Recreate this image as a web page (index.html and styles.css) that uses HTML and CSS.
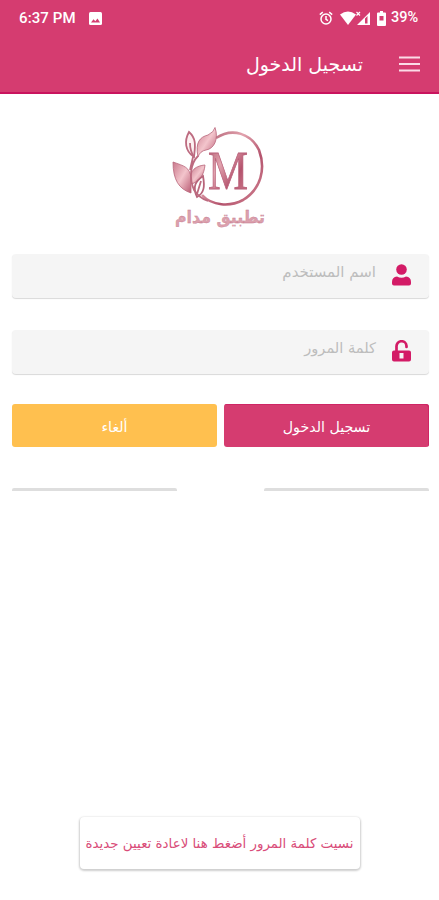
FILE: index.html
```html
<!DOCTYPE html>
<html lang="ar">
<head>
<meta charset="utf-8">
<title>تسجيل الدخول</title>
<link rel="stylesheet" href="styles.css">
</head>
<body>
<header class="top">
  <div class="status">
    <span class="clock">6:37 PM</span>
    <svg class="photo" width="13" height="13" viewBox="0 0 13 13"><rect width="13" height="13" rx="1.500" fill="#fff"/><path d="M2 10.500 4.500 7.300 6.300 9.300 8.500 6.500 11 10.500Z" fill="#d53c70"/></svg>
    <svg class="alarm" width="14" height="15" viewBox="0 0 14 15" fill="none" stroke="#fff" stroke-width="1.500"><circle cx="7" cy="8" r="5"/><path d="M.8 3.600 3.800 1.200M13.200 3.600 10.200 1.200M7 5v3.300l2 1.400"/></svg>
    <svg class="signal" width="31" height="15" viewBox="0 0 31 15"><path d="M0 3.500Q8-2.500 16 3.500L8 14Z" fill="#fff"/><path fill-rule="evenodd" d="M30 1V14H17ZM25 7.500V12.500H27.500V5Z" fill="#fff"/><path d="M16.500 1l3.500 3.500M20 1l-3.500 3.500" stroke="#fff" stroke-width="1.200"/></svg>
    <svg class="battery" width="9" height="15" viewBox="0 0 9 15"><path fill-rule="evenodd" d="M3 0h3v1.500h2q1 0 1 1V14q0 1-1 1H1q-1 0-1-1V2.500q0-1 1-1h2ZM2.500 5v4.500h4V5Z" fill="#fff"/></svg>
    <span class="percent">39%</span>
  </div>
  <div class="bar" dir="rtl">
    <svg class="menu" width="21" height="16" viewBox="0 0 21 16"><path d="M0 1.500h21M0 8h21M0 14.500h21" stroke="#fbdce7" stroke-width="2"/></svg>
    <h1 class="title">تسجيل الدخول</h1>
  </div>
</header>
<main class="page">
  <svg class="logo" width="110" height="116" viewBox="165 122 110 116">
    <defs>
      <linearGradient id="rose" x1="0" y1="0" x2="1" y2="1"><stop offset="0" stop-color="#a95468"/><stop offset=".35" stop-color="#e2a3ae"/><stop offset=".65" stop-color="#b4536d"/><stop offset="1" stop-color="#d38694"/></linearGradient>
      <linearGradient id="leaf" x1="0" y1="0" x2="1" y2="1"><stop offset="0" stop-color="#c9798c"/><stop offset=".5" stop-color="#f3c5cc"/><stop offset="1" stop-color="#b95b73"/></linearGradient>
    </defs>
    <path d="M216 138C233 127 251 134 259 150C266 169 261 189 243 200C230 207 212 206 202 195" fill="none" stroke="url(#rose)" stroke-width="2.600"/>
    <g fill="url(#leaf)" stroke="#b7647a" stroke-width=".8">
      <path d="M198 157C195 142 200 137 208 135Q214 132 215 127.500C219 139 214 149 206 150Q200 151 198 157Z"/>
      <path d="M173 162C184 166 190 167 191 178V193C179 189 173 180 173 162Z"/>
      <path d="M192 184C188 172 194 166 205 165C204 174 201 180 192 184Z"/>
      <path d="M197 197C192 186 196 181 203 176C205 187 204 193 197 197Z" fill="#fff" stroke-width="1.800"/>
    </g>
    <g fill="none" stroke="#bd6b80" stroke-width="1.800">
      <path d="M189 132C197 139 195 147 194 157C185 151 184 141 189 132Z" fill="#fdf1f2"/>
      <path d="M198 156C190 164 189 178 194 190Q199 198 208 201M190 143Q190 151 194 157M193 157L190 170M201 181L197 194"/>
    </g>
    <text class="letter" x="228" y="189" text-anchor="middle" textLength="40" lengthAdjust="spacingAndGlyphs">M</text>
    <text class="brand" x="220" y="223" text-anchor="middle" textLength="90" lengthAdjust="spacingAndGlyphs" direction="rtl">تطبيق مدام</text>
  </svg>
  <form class="form" dir="rtl">
    <label class="field">
      <svg width="19" height="22" viewBox="0 0 19 22" fill="#d31b66"><circle cx="9.500" cy="5.500" r="5.300"/><path d="M5 12.500Q9.500 15 14 12.500Q19 13 19 18V19.500Q19 21.500 17 21.500H2Q0 21.500 0 19.500V18Q0 13 5 12.500Z"/></svg>
      <span class="hint user">اسم المستخدم</span>
    </label>
    <label class="field">
      <svg width="19" height="22" viewBox="0 0 19 22"><path d="M4.500 11V6.500A5 5 0 0 1 14.500 6V7" fill="none" stroke="#d31b66" stroke-width="2.700" stroke-linecap="round"/><path fill-rule="evenodd" d="M2 10.500H17Q19 10.500 19 12.500V19.500Q19 21.500 17 21.500H2Q0 21.500 0 19.500V12.500Q0 10.500 2 10.500ZM7.500 13V18.500H11.500V13Z" fill="#d31b66"/></svg>
      <span class="hint pass">كلمة المرور</span>
    </label>
    <div class="actions">
      <button class="btn login" type="button"><span>تسجيل الدخول</span></button>
      <button class="btn cancel" type="button"><span>ألغاء</span></button>
    </div>
    <div class="rules"><i></i><i></i></div>
  </form>
  <button class="forgot" type="button" dir="rtl"><span>نسيت كلمة المرور أضغط هنا لاعادة تعيين جديدة</span></button>
</main>
</body>
</html>
```
FILE: styles.css
```css
* { box-sizing: border-box; }
body { margin: 0; background: #fff; font-family: "DejaVu Sans", sans-serif; }
svg { flex: none; display: block; }
.top { height: 94px; background: #d53c70; border-bottom: 2px solid #c9145e; color: #fff; }
.status { height: 36px; display: flex; align-items: center; padding: 0 20px 0 19px; font: 500 15px/36px Roboto, sans-serif; }
.clock { width: 70px; white-space: nowrap; letter-spacing: .1px; }
.alarm { margin-left: auto; margin-right: 7px; }
.signal { margin-right: 6px; }
.battery { margin-right: 5px; }
.percent { width: 28px; white-space: nowrap; font-size: 14.500px; line-height: 38px; }
.bar { height: 56px; display: flex; align-items: center; padding: 0 19px; }
.title { margin: 0 36px 0 0; font-size: 19px; font-weight: 400; }
.page { height: 806px; display: flex; flex-direction: column; align-items: center; padding: 28px 10px 31px 12px; }
.logo { margin-right: 2px; }
.letter { font: 400 55px "Liberation Serif", serif; fill: url(#rose); stroke: #b9607a; stroke-width: .8px; }
.brand { font: 700 17px "DejaVu Sans", sans-serif; fill: #dba0ad; stroke: #c4788c; stroke-width: .3px; }
.form { width: 100%; margin-top: 16px; }
.field { height: 44px; margin-bottom: 32px; padding: 0 18px; display: flex; align-items: center; background: #f5f5f5; border-radius: 4px; box-shadow: 0 1px 1px #d9d9d9; }
.field svg { margin-top: -2px; }
.hint { margin-right: 16px; padding-bottom: 8px; color: #bdbdbd; font-size: 15px; white-space: nowrap; }
.pass { font-size: 14.600px; padding-bottom: 10px; }
.actions { display: flex; gap: 7px; margin-top: -2px; }
.btn { flex: 1; height: 43px; padding: 2px 0 0; border: 0; border-radius: 3px; color: #fff; font: 14.200px "DejaVu Sans", sans-serif; }
.login { background: #d53c70; box-shadow: inset -1px 1px 0 #cf2665; }
.cancel { background: #ffc04f; }
.rules { display: flex; justify-content: space-between; margin-top: 41px; }
.rules i { width: 165px; height: 3px; border-radius: 2px 2px 0 0; background: #dedede; }
.forgot { width: 280px; height: 52px; margin: auto 2px 0 0; padding: 0; border: 0; border-radius: 4px; background: #fff; box-shadow: 0 1px 2px 1px #cfcfcf; color: #d94c79; font: 13.400px "DejaVu Sans", sans-serif; white-space: nowrap; }
```
